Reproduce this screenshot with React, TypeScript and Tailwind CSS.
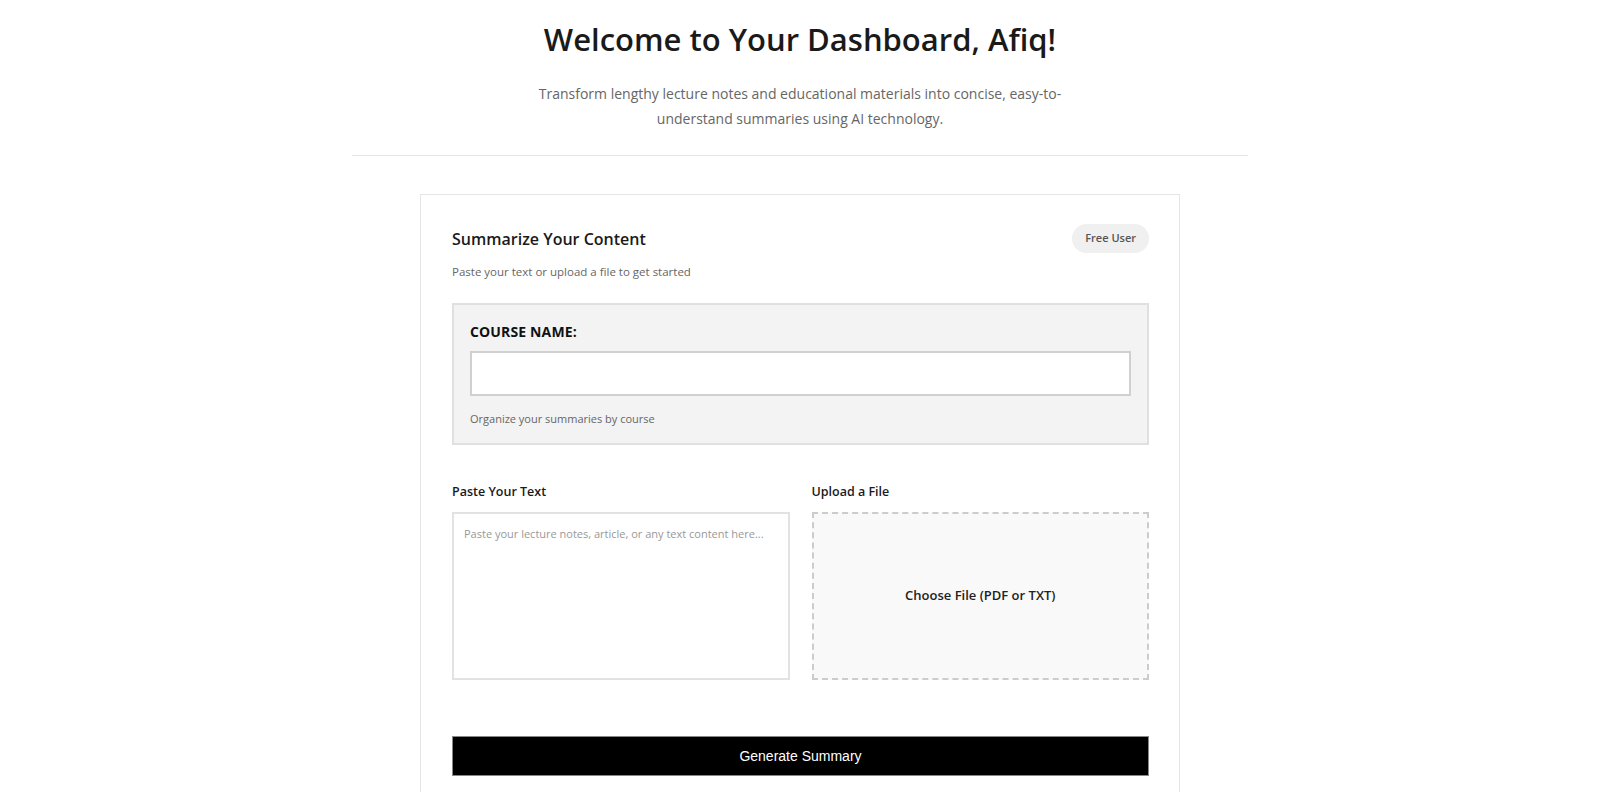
import React from "react";

export default function App() {
  return (
    <div className="min-h-screen bg-white font-['Open_Sans','Noto_Sans',sans-serif] text-[#1a1a1a]">
      <header className="max-w-[896px] mx-auto text-center pt-[19px] pb-[24px] border-b border-[#e5e5e5]">
        <h1 className="text-[31px] leading-[40px] font-semibold text-[#1a1a1a]">
          Welcome to Your Dashboard, Afiq!
        </h1>
        <p className="mt-[22px] text-[14px] leading-[25px] text-[#666]">
          Transform lengthy lecture notes and educational materials into concise, easy-to-
          <br />
          understand summaries using AI technology.
        </p>
      </header>

      <main className="w-[760px] mx-auto mt-[38px] border border-[#e5e5e5] pl-[31px] pr-[30px] pt-[28px] pb-[40px]">
        <div className="flex items-center justify-between">
          <h2 className="text-[16px] leading-[27px] font-semibold mt-[3px]">Summarize Your Content</h2>
          <span className="h-[29px] px-[13px] rounded-full bg-[#f0f0f0] text-[#555] text-[11px] font-semibold flex items-center">
            Free User
          </span>
        </div>
        <p className="mt-[9px] text-[11.5px] leading-[20px] text-[#666]">
          Paste your text or upload a file to get started
        </p>

        <section className="mt-[21px] border-2 border-[#e0e0e0] bg-[#f3f3f3] px-[16px] pt-[17px] pb-[15px]">
          <label className="block text-[14px] leading-[20px] font-bold uppercase tracking-[0.01em] text-[#111]">
            Course Name:
          </label>
          <input
            type="text"
            className="mt-[9px] block w-full h-[45px] bg-white border-2 border-[#d0d0d0] outline-none px-3"
          />
          <p className="mt-[14px] text-[11px] leading-[18px] text-[#666]">
            Organize your summaries by course
          </p>
        </section>

        <div className="mt-[37px] grid grid-cols-2 gap-[22px]">
          <div>
            <div className="text-[12.5px] leading-[20px] font-semibold">Paste Your Text</div>
            <textarea
              className="mt-[10px] block w-full h-[168px] border-2 border-[#e2e2e2] bg-white px-[10px] py-[10px] text-[11px] leading-[20px] resize-none outline-none placeholder:text-[#999]"
              placeholder="Paste your lecture notes, article, or any text content here..."
            />
          </div>
          <div>
            <div className="text-[12.5px] leading-[20px] font-semibold">Upload a File</div>
            <div className="mt-[10px] h-[168px] border-2 border-dashed border-[#cccccc] bg-[#f9f9f9] flex items-center justify-center">
              <span className="text-[13px] font-semibold text-[#222]">Choose File (PDF or TXT)</span>
            </div>
          </div>
        </div>

        <button className="mt-[56px] w-full h-[40px] bg-black border border-[#888] text-white text-[14px] font-['Liberation_Sans',Arial,sans-serif]">
          Generate Summary
        </button>
      </main>
    </div>
  );
}
